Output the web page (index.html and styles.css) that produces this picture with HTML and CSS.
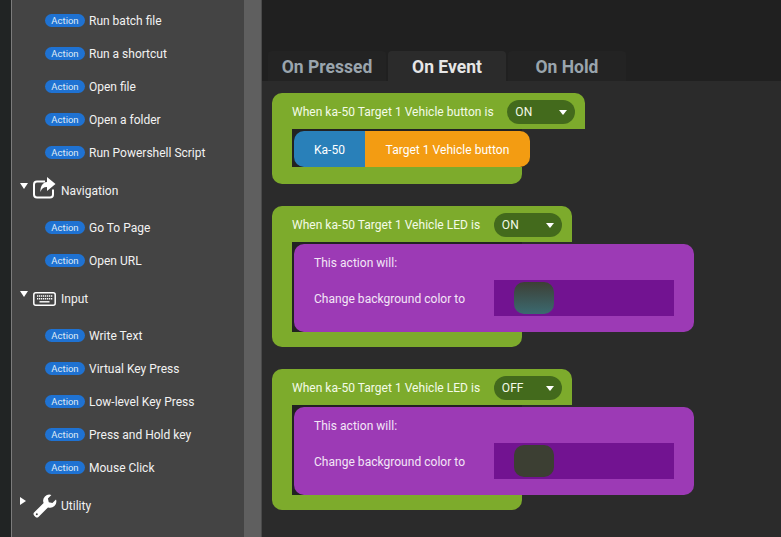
FILE: index.html
```html
<!DOCTYPE html>
<html lang="en">
<head>
<meta charset="utf-8">
<title>Actions</title>
<link rel="stylesheet" href="styles.css">
</head>
<body>
<div class="app">
  <aside class="sidebar">
    <div class="list">
      <div class="item first"><span class="badge">Action</span><span>Run batch file</span></div>
      <div class="item"><span class="badge">Action</span><span>Run a shortcut</span></div>
      <div class="item"><span class="badge">Action</span><span>Open file</span></div>
      <div class="item"><span class="badge">Action</span><span>Open a folder</span></div>
      <div class="item"><span class="badge">Action</span><span>Run Powershell Script</span></div>
      <div class="cat"><span class="tri down"></span>
        <svg class="ico" viewBox="0 0 24 24" fill="none" stroke="#fff" stroke-width="2"><path d="M12 5.500H4a3 3 0 0 0-3 3V18.500a3 3 0 0 0 3 3h13a3 3 0 0 0 3-3v-5"/><path fill="#fff" stroke="none" d="M14 1l8.500 7-8.500 7v-4c-3.500 0-5.500 1.500-6.500 5-.5-5 2-9.500 6.500-10z"/></svg>
        <span>Navigation</span></div>
      <div class="item"><span class="badge">Action</span><span>Go To Page</span></div>
      <div class="item"><span class="badge">Action</span><span>Open URL</span></div>
      <div class="cat"><span class="tri down"></span>
        <svg class="ico" viewBox="0 0 24 24" fill="none" stroke="#fff"><rect x=".8" y="8.800" width="21.400" height="12.400" rx="2" stroke-width="1.500"/><path stroke-width="1.400" stroke-dasharray="1.300 .7" d="M4 12h15.500M4 14.800h15.500"/><path stroke-width="1.400" d="M6.500 17.800h10"/></svg>
        <span>Input</span></div>
      <div class="item"><span class="badge">Action</span><span>Write Text</span></div>
      <div class="item"><span class="badge">Action</span><span>Virtual Key Press</span></div>
      <div class="item"><span class="badge">Action</span><span>Low-level Key Press</span></div>
      <div class="item"><span class="badge">Action</span><span>Press and Hold key</span></div>
      <div class="item"><span class="badge">Action</span><span>Mouse Click</span></div>
      <div class="cat"><span class="tri right"></span>
        <svg class="ico wrench" viewBox="0 0 24 24" fill="#fff" fill-rule="evenodd"><path d="M23 5.600l-3.600 3.500-3.600-.9-.9-3.600L18.400.9A6.200 6.200 0 0 0 10.600 9L1.300 18.300a2.400 2.400 0 0 0 0 3.400l1 1a2.400 2.400 0 0 0 3.400 0L15 13.400A6.200 6.200 0 0 0 23 5.600zM3.800 19.200a1 1 0 1 1 0 2 1 1 0 0 1 0-2z"/></svg>
        <span>Utility</span></div>
    </div>
    <div class="scrollbar"></div>
  </aside>
  <main class="main">
    <div class="tabs">
      <div class="tab">On Pressed</div>
      <div class="tab active">On Event</div>
      <div class="tab">On Hold</div>
    </div>
    <div class="content">
      <section class="block short">
        <div class="head"><span>When ka-50 Target 1 Vehicle button is</span><span class="select">ON<i class="caret"></i></span></div>
        <div class="slot">
          <div class="pill"><span class="ka">Ka-50</span><span class="target">Target 1 Vehicle button</span></div>
        </div>
        <div class="foot"></div>
      </section>
      <section class="block">
        <div class="head"><span>When ka-50 Target 1 Vehicle LED is</span><span class="select">ON<i class="caret"></i></span></div>
        <div class="slot">
          <div class="action">
            <div>This action will:</div>
            <div class="row"><span class="lbl">Change background color to</span><span class="well"><span class="swatch teal"></span></span></div>
          </div>
        </div>
        <div class="foot"></div>
      </section>
      <section class="block">
        <div class="head"><span>When ka-50 Target 1 Vehicle LED is</span><span class="select">OFF<i class="caret"></i></span></div>
        <div class="slot">
          <div class="action">
            <div>This action will:</div>
            <div class="row"><span class="lbl">Change background color to</span><span class="well"><span class="swatch olive"></span></span></div>
          </div>
        </div>
        <div class="foot"></div>
      </section>
    </div>
  </main>
</div>
</body>
</html>
```
FILE: styles.css
```css
* { box-sizing: border-box; }
html, body { margin: 0; height: 100%; overflow: hidden; }
body { background: #212424; font: 12px Roboto, sans-serif; color: #fff; }
.app { display: flex; height: 537px; padding-left: 11px; }
.sidebar { width: 250px; display: flex; border-left: 1px solid #7c7c7c; background: #444; }
.list { width: 232px; }
.item { height: 33px; display: flex; align-items: center; gap: 4px; padding-left: 33px; color: #f2f2f2; }
.item.first { margin-top: 4px; }
.badge { align-self: flex-start; width: 40px; height: 13px; margin-top: 10px; border-radius: 7px; background: #1f72d2; color: #dfeaf5; font-size: 9.5px; line-height: 13px; text-align: center; }
.cat { height: 42px; padding: 2px 0 0 8px; display: flex; align-items: center; color: #f2f2f2; }
.tri { width: 0; height: 0; margin-bottom: 11px; }
.tri.down { border-left: 4px solid transparent; border-right: 4px solid transparent; border-top: 6px solid #fff; }
.tri.right { border-top: 4px solid transparent; border-bottom: 4px solid transparent; border-left: 6px solid #fff; margin-right: 2px; }
.ico { width: 24px; height: 24px; margin: -6px 4px 0 5px; flex: none; overflow: visible; }
.wrench { margin-top: 0; }
.scrollbar { width: 17px; background: #5f5f5f; }
.main { flex: 1; display: flex; flex-direction: column; border-left: 1px solid #4a4a4a; background: #202020; }
.tabs { display: flex; height: 81px; padding: 51px 0 0 6px; gap: 2px; }
.tab { width: 118px; height: 30px; border-radius: 4px 4px 0 0; background: #232323; color: #9aa5ad; font-size: 17.5px; font-weight: 700; line-height: 32px; text-align: center; }
.tab.active { background: #2b2b2b; color: #e6e6e6; }
.content { flex: 1; background: #2b2b2b; padding: 12px 0 0 10px; }
.block { margin-bottom: 22px; letter-spacing: .03px; }
.head { width: max-content; height: 36px; padding: 2px 10px 0 20px; display: flex; align-items: center; gap: 13.7px; background: #7dab2c; border-radius: 10px 10px 0 0; color: #f4fbe8; }
.select { position: relative; width: 68px; height: 24px; padding-left: 8px; line-height: 24px; border-radius: 12px; background: #436a1c; }
.caret { position: absolute; right: 8px; top: 10px; border-left: 4px solid transparent; border-right: 4px solid transparent; border-top: 5px solid #fff; }
.slot { display: flex; margin-left: 20px; width: 230px; background: #222; box-shadow: -20px 0 0 #7dab2c; position: relative; padding: 2px 0 0 2px; }
.pill { display: flex; flex: none; height: 36px; border-radius: 10px; overflow: hidden; }
.ka { width: 71px; background: #2980b9; text-align: center; line-height: 38px; }
.target { width: 165px; background: #f39c12; text-align: center; line-height: 38px; }
.foot { width: 250px; height: 15px; background: #7dab2c; border-radius: 0 0 10px 10px; }
.short .foot { height: 17px; }
.action { flex: none; width: 400px; height: 88px; border-radius: 10px; background: #9c3ab5; padding: 12px 20px; color: #f3e6f7; }
.row { display: flex; align-items: center; margin-top: 10px; }
.lbl { width: 180px; padding-top: 2px; }
.well { width: 180px; height: 36px; padding: 2px 20px; background: #721391; }
.swatch { display: block; width: 40px; height: 32px; border-radius: 10px; }
.teal { background: linear-gradient(#3d3f35, #3b6a70); }
.olive { background: #3c3f33; }
```
